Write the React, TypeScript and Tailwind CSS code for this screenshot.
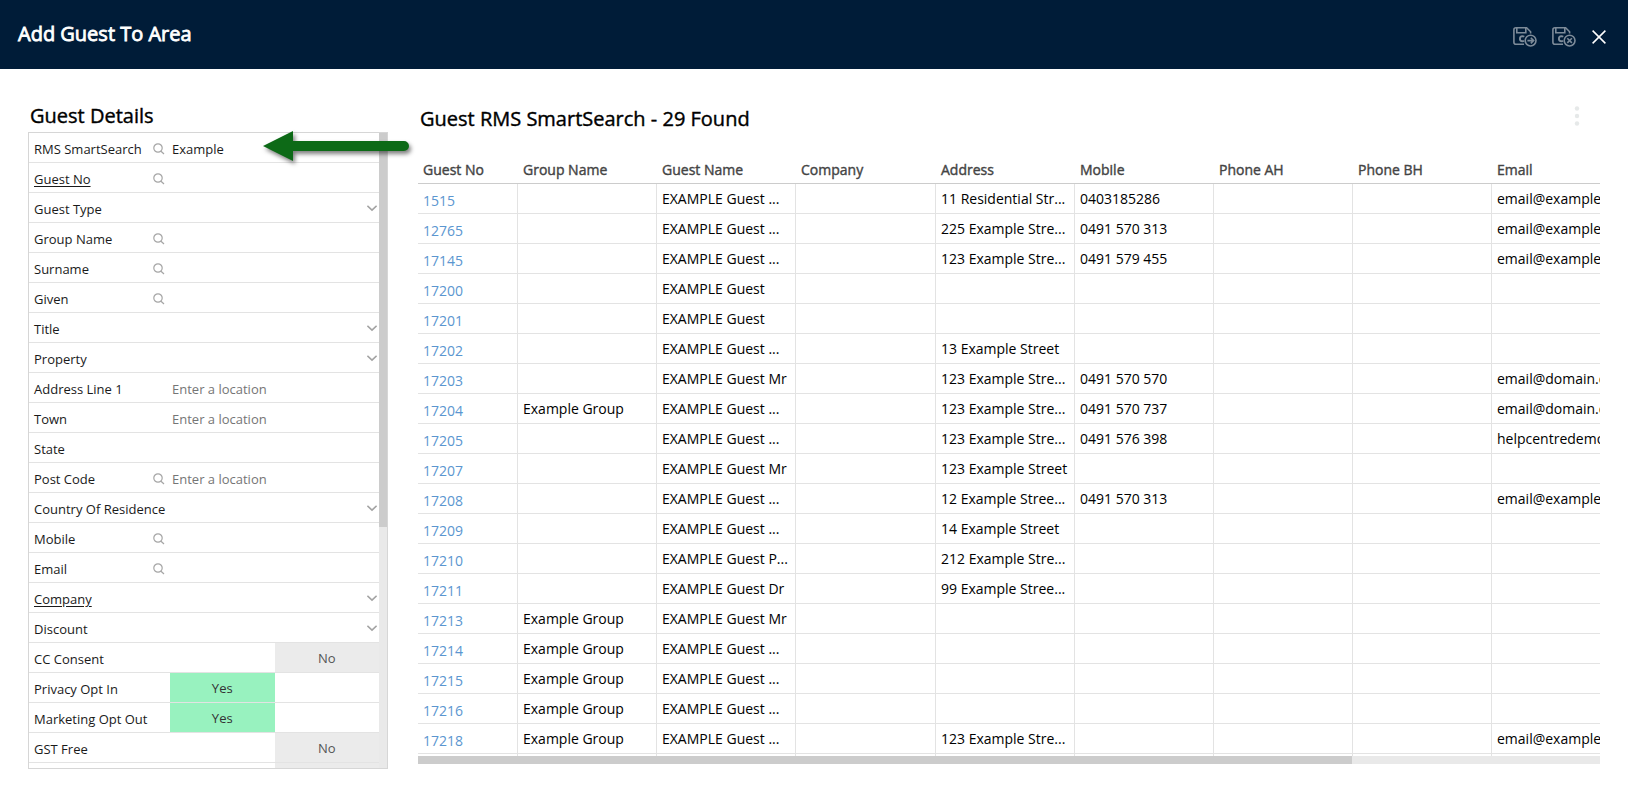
import * as React from 'react';

interface IField {
  label: string;
  kind: 'text' | 'select' | 'toggle';
  search?: boolean;
  link?: boolean;
  value?: string;
  placeholder?: string;
  on?: boolean;
}

interface IGuest {
  no: string;
  group?: string;
  name: string;
  address?: string;
  mobile?: string;
  email?: string;
}

const fields: IField[] = [
  { label: 'RMS SmartSearch', kind: 'text', search: true, value: 'Example' },
  { label: 'Guest No', kind: 'text', search: true, link: true },
  { label: 'Guest Type', kind: 'select' },
  { label: 'Group Name', kind: 'text', search: true },
  { label: 'Surname', kind: 'text', search: true },
  { label: 'Given', kind: 'text', search: true },
  { label: 'Title', kind: 'select' },
  { label: 'Property', kind: 'select' },
  { label: 'Address Line 1', kind: 'text', placeholder: 'Enter a location' },
  { label: 'Town', kind: 'text', placeholder: 'Enter a location' },
  { label: 'State', kind: 'text' },
  { label: 'Post Code', kind: 'text', search: true, placeholder: 'Enter a location' },
  { label: 'Country Of Residence', kind: 'select' },
  { label: 'Mobile', kind: 'text', search: true },
  { label: 'Email', kind: 'text', search: true },
  { label: 'Company', kind: 'select', link: true },
  { label: 'Discount', kind: 'select' },
  { label: 'CC Consent', kind: 'toggle', on: false },
  { label: 'Privacy Opt In', kind: 'toggle', on: true },
  { label: 'Marketing Opt Out', kind: 'toggle', on: true },
  { label: 'GST Free', kind: 'toggle', on: false },
];

const columns = [
  { title: 'Guest No', width: 'w-[100px]' },
  { title: 'Group Name', width: 'w-[139px]' },
  { title: 'Guest Name', width: 'w-[139px]' },
  { title: 'Company', width: 'w-[140px]' },
  { title: 'Address', width: 'w-[139px]' },
  { title: 'Mobile', width: 'w-[139px]' },
  { title: 'Phone AH', width: 'w-[139px]' },
  { title: 'Phone BH', width: 'w-[139px]' },
  { title: 'Email', width: '' },
];

const guests: IGuest[] = [
  { no: '1515', name: 'EXAMPLE Guest ...', address: '11 Residential Str...', mobile: '0403185286', email: 'email@example.com' },
  { no: '12765', name: 'EXAMPLE Guest ...', address: '225 Example Stre...', mobile: '0491 570 313', email: 'email@example.com' },
  { no: '17145', name: 'EXAMPLE Guest ...', address: '123 Example Stre...', mobile: '0491 579 455', email: 'email@example.com' },
  { no: '17200', name: 'EXAMPLE Guest' },
  { no: '17201', name: 'EXAMPLE Guest' },
  { no: '17202', name: 'EXAMPLE Guest ...', address: '13 Example Street' },
  { no: '17203', name: 'EXAMPLE Guest Mr', address: '123 Example Stre...', mobile: '0491 570 570', email: 'email@domain.com' },
  { no: '17204', group: 'Example Group', name: 'EXAMPLE Guest ...', address: '123 Example Stre...', mobile: '0491 570 737', email: 'email@domain.com' },
  { no: '17205', name: 'EXAMPLE Guest ...', address: '123 Example Stre...', mobile: '0491 576 398', email: 'helpcentredemo' },
  { no: '17207', name: 'EXAMPLE Guest Mr', address: '123 Example Street' },
  { no: '17208', name: 'EXAMPLE Guest ...', address: '12 Example Stree...', mobile: '0491 570 313', email: 'email@example.com' },
  { no: '17209', name: 'EXAMPLE Guest ...', address: '14 Example Street' },
  { no: '17210', name: 'EXAMPLE Guest P...', address: '212 Example Stre...' },
  { no: '17211', name: 'EXAMPLE Guest Dr', address: '99 Example Stree...' },
  { no: '17213', group: 'Example Group', name: 'EXAMPLE Guest Mr' },
  { no: '17214', group: 'Example Group', name: 'EXAMPLE Guest ...' },
  { no: '17215', group: 'Example Group', name: 'EXAMPLE Guest ...' },
  { no: '17216', group: 'Example Group', name: 'EXAMPLE Guest ...' },
  { no: '17218', group: 'Example Group', name: 'EXAMPLE Guest ...', address: '123 Example Stre...', email: 'email@example.com' },
];

const SearchIcon = () => (
  <svg width="12" height="12" viewBox="0 0 12 12" fill="none" stroke="#a6a6a6" strokeWidth="1.2">
    <circle cx="5" cy="5" r="4.2" />
    <path d="M8 8.2 L11 11" />
  </svg>
);

const ChevronIcon = () => (
  <svg className="pointer-events-none absolute right-0.5 top-3" width="10" height="8" viewBox="0 0 10 8" fill="none" stroke="#a3a3a3" strokeWidth="1.6">
    <path d="M0.4 0.9 L5 5.1 L9.6 0.9" />
  </svg>
);

// floppy disk with a C on it, and a round badge in the corner
const SaveIcon = ({ children }: { children: React.ReactNode }) => (
  <svg width="24" height="20" viewBox="0 0 24 20" fill="none" stroke="#7d8b99" strokeWidth="1.6">
    <path d="M11 17.2 H3 Q0.9 17.2 0.9 15.2 V2.8 Q0.9 0.8 3 0.8 H13.6 L17.6 4.8 V6.6" />
    <path d="M3.8 1 V5.7 H12.8 V1" />
    <path strokeWidth="1.9" d="M11.2 9.8 Q10.4 9.1 9.4 9.1 Q6.9 9.3 6.9 11.7 Q6.9 14.1 9.4 14.2 Q10.4 14.2 11 13.6" />
    <circle cx="17.6" cy="13.6" r="5.4" />
    {children}
  </svg>
);

const FieldRow = ({ field }: { field: IField }) => {
  const id = field.label.toLowerCase().replace(/ /g, '-');
  const [value, setValue] = React.useState<string>(field.value || '');
  const [on, setOn] = React.useState<boolean>(!!field.on);

  return (
    <div className="flex h-[30px] shrink-0 border-b border-[#e3e3e3] text-[13px] text-[#1a1a1a]">
      <div className="flex w-[141px] shrink-0 items-center whitespace-nowrap pl-[5px]">
        <label htmlFor={id} className={field.link ? 'flex-1 pt-[5px] underline underline-offset-2' : 'flex-1 pt-[5px]'}>
          {field.label}
        </label>
        {field.search && (
          <button type="button" aria-label={`Search ${field.label}`} className="mr-[5px] pt-[3px]">
            <SearchIcon />
          </button>
        )}
      </div>
      {field.kind === 'text' && (
        <input
          id={id}
          type="text"
          value={value}
          placeholder={field.placeholder}
          onChange={(e) => setValue(e.target.value)}
          className="min-w-0 flex-1 pl-0.5 pt-[5px] outline-none placeholder:text-[#757575]"
        />
      )}
      {field.kind === 'select' && (
        <div className="relative flex flex-1">
          <select id={id} className="flex-1 appearance-none bg-transparent outline-none">
            <option></option>
          </select>
          <ChevronIcon />
        </div>
      )}
      {field.kind === 'toggle' && (
        <button id={id} type="button" aria-pressed={on} onClick={() => setOn(!on)} className="flex flex-1">
          <span className={on ? 'h-full flex-1 bg-[#98f2bf] pt-px leading-[29px] text-[#333]' : 'h-full flex-1'}>{on && 'Yes'}</span>
          <span className={on ? 'h-full flex-1' : 'h-full flex-1 bg-[#ebebeb] pt-px leading-[29px] text-[#555]'}>{!on && 'No'}</span>
        </button>
      )}
    </div>
  );
};

const GuestDetails = () => (
  <section className="flex w-[360px] shrink-0 flex-col">
    <h2 className="pl-0.5 text-xl leading-7 [-webkit-text-stroke:0.4px_black]">Guest Details</h2>
    <div className="mt-0.5 flex min-h-0 flex-1 border border-[#d6d6d6]">
      <div className="flex min-w-0 flex-1 flex-col overflow-hidden">
        {fields.map((field) => (
          <FieldRow key={field.label} field={field} />
        ))}
        <div className="flex h-[30px] shrink-0 pl-[141px]">
          <div className="flex-1"></div>
          <div className="flex-1 bg-[#ebebeb]"></div>
        </div>
      </div>
      <div className="w-2 bg-[#e9e9e9]">
        <div className="h-[62%] bg-[#cccccc]"></div>
      </div>
    </div>
  </section>
);

const GuestTable = () => (
  <section className="mb-[5px] flex min-w-0 flex-1 flex-col">
    <div className="flex items-start justify-between pl-0.5 pr-5">
      <h2 className="pt-[3px] text-xl leading-7 [-webkit-text-stroke:0.4px_black]">Guest RMS SmartSearch - 29 Found</h2>
      <button type="button" aria-label="More options" className="pt-1">
        <svg width="6" height="20" viewBox="0 0 6 20" fill="#e6e9e9">
          <circle cx="3" cy="2.5" r="2.2" />
          <circle cx="3" cy="10" r="2.2" />
          <circle cx="3" cy="17.5" r="2.2" />
        </svg>
      </button>
    </div>
    <div className="mt-5 min-h-0 flex-1 overflow-hidden">
      <table className="w-[1500px] table-fixed border-separate border-spacing-0 text-sm">
        <thead>
          <tr className="h-[31px] text-left text-[#444]">
            {columns.map((column) => (
              <th
                key={column.title}
                className={`${column.width} border-b border-[#cccccc] p-0 pl-[5px] pt-[3px] font-normal [-webkit-text-stroke:0.4px_#444]`}
              >
                {column.title}
              </th>
            ))}
          </tr>
        </thead>
        <tbody>
          {guests.map((guest) => (
            <tr key={guest.no} className="h-[30px] whitespace-nowrap">
              <td className="border-b border-r border-[#e3e3e3] p-0 pl-[5px] pt-1">
                <a href="#" className="text-[#5b96d0]">
                  {guest.no}
                </a>
              </td>
              {[guest.group, guest.name, '', guest.address, guest.mobile, '', '', guest.email].map((text, i) => (
                <td key={i} className="border-b border-r border-[#e3e3e3] p-0 pl-[5px]">
                  {text}
                </td>
              ))}
            </tr>
          ))}
          <tr className="h-[30px]">
            {columns.map((column) => (
              <td key={column.title} className="border-r border-[#e3e3e3] p-0"></td>
            ))}
          </tr>
        </tbody>
      </table>
    </div>
    <div className="h-2 bg-[#e9e9e9]">
      <div className="h-2 w-[79%] bg-[#cccccc]"></div>
    </div>
  </section>
);

// callout pointing at the smart search box
const Arrow = () => (
  <svg className="pointer-events-none absolute left-[263px] top-[131px] overflow-visible drop-shadow-[2px_3px_2px_rgba(0,0,0,0.5)]" width="146" height="30" viewBox="0 0 146 30" fill="#0d6a17">
    <path d="M0 15 L30 0 V10 H141 A5 5 0 0 1 141 20 H30 V30 Z" />
  </svg>
);

const App = () => {
  return (
    <div className="relative flex h-screen flex-col overflow-hidden bg-white font-['Open_Sans',sans-serif] text-black">
      <header className="flex h-[69px] shrink-0 items-center justify-between bg-[#001c38] pl-[18px] pr-[21px] text-white">
        <h1 className="pb-0.5 text-xl [-webkit-text-stroke:0.8px_white]">Add Guest To Area</h1>
        <div className="flex items-center gap-[15px] pt-1">
          <button type="button" aria-label="Save and continue">
            <SaveIcon>
              <path d="M14.4 13.6 H20.4 M17.8 10.8 L20.6 13.6 L17.8 16.4" />
            </SaveIcon>
          </button>
          <button type="button" aria-label="Save and close">
            <SaveIcon>
              <path d="M15.3 11.3 L19.9 15.9 M19.9 11.3 L15.3 15.9" />
            </SaveIcon>
          </button>
          <button type="button" aria-label="Close">
            <svg width="16" height="14" viewBox="0 0 16 14" fill="none" stroke="white" strokeWidth="1.5">
              <path d="M1.6 0.6 L14.4 13.4 M14.4 0.6 L1.6 13.4" />
            </svg>
          </button>
        </div>
      </header>
      <main className="flex min-h-0 flex-1 gap-[30px] pb-[29px] pl-7 pr-7 pt-[33px]">
        <GuestDetails />
        <GuestTable />
      </main>
      <Arrow />
    </div>
  );
};

export default App;
